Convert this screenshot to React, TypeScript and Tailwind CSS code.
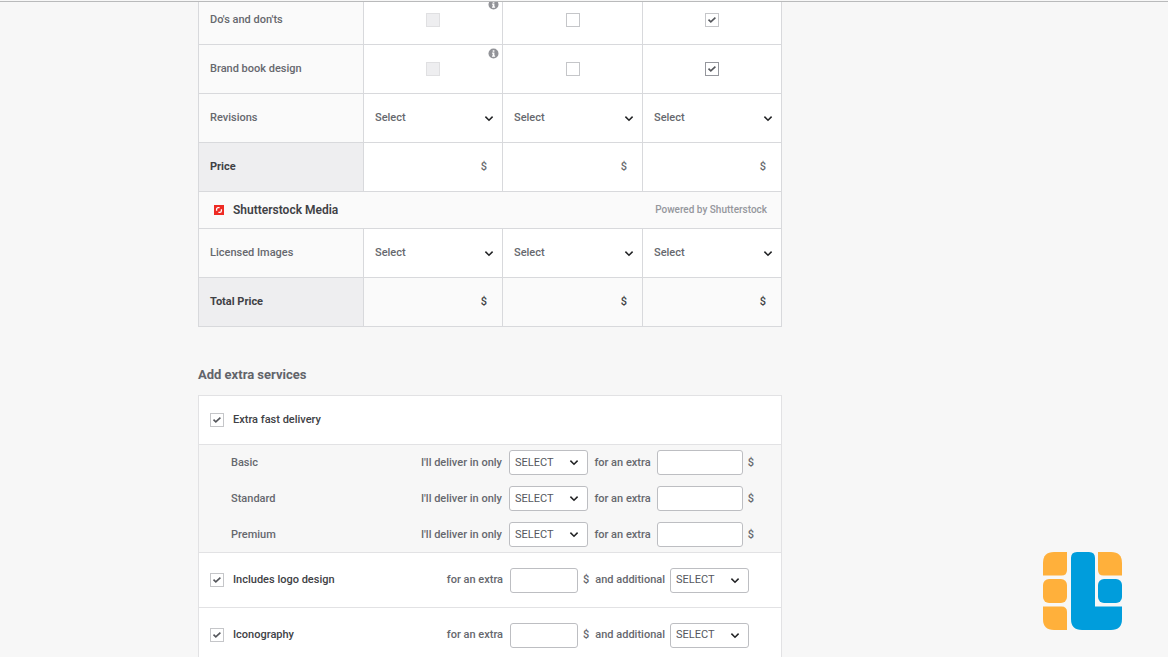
import type { ReactNode } from "react";

type Tier = "Basic" | "Standard" | "Premium";
const TIERS: Tier[] = ["Basic", "Standard", "Premium"];

function Chevron({ className }: { className: string }) {
  return (
    <svg viewBox="0 0 10 7" fill="none" stroke="#222325" strokeWidth="1.5" aria-hidden="true" className={"pointer-events-none col-start-1 row-start-1 h-[7px] w-[10px] self-center justify-self-end " + className}>
      <path d="M1.4 1.6 5 5.200l3.6-3.600" />
    </svg>
  );
}

function CheckBox({ id, label, checked, disabled, strong }: { id?: string; label?: string; checked?: boolean; disabled?: boolean; strong?: boolean }) {
  return (
    <span className="inline-grid size-[14px] shrink-0 align-middle">
      <input
        id={id}
        type="checkbox"
        aria-label={label}
        defaultChecked={checked}
        disabled={disabled}
        className={
          "peer col-start-1 row-start-1 size-[14px] appearance-none border bg-white disabled:border-[#e0e0e2] disabled:bg-[#eeeef0] " +
          (strong ? "border-[#95979d]" : "border-[#c5c6c9]")
        }
      />
      <svg viewBox="0 0 14 14" fill="none" stroke="#55575c" strokeWidth="1.6" aria-hidden="true" className="pointer-events-none invisible col-start-1 row-start-1 size-[14px] peer-checked:visible">
        <path d="M3.5 6.700 5.800 8.900l4.600-4.300" />
      </svg>
    </span>
  );
}

function InfoIcon() {
  return (
    <svg viewBox="0 0 11 11" aria-hidden="true" className="absolute top-[3px] right-[3px] size-[11px]">
      <circle cx="5.5" cy="5.5" r="5" fill="#929398" />
      <path d="M4.7 2.2h1.7v1.5H4.7zM4.1 4.6h2.3v3h.7v1.1H4V7.6h.7V5.7h-.6z" fill="#fff" />
    </svg>
  );
}

function Row({ label, strong, children }: { label: string; strong?: boolean; children: ReactNode }) {
  return (
    <tr className="h-[49px]">
      <th
        scope="row"
        className={
          "border-r border-b border-[#d8d9dc] pl-[11px] text-left " +
          (strong ? "bg-[#eeeef0] font-bold text-[#404145]" : "bg-[#fafafa] font-medium")
        }
      >
        {label}
      </th>
      {children}
    </tr>
  );
}

const CELL = "relative border-r border-b border-[#d8d9dc]";

function CheckRow({ label, strong }: { label: string; strong?: boolean }) {
  return (
    <Row label={label}>
      {TIERS.map((tier, i) => (
        <td key={tier} className={CELL + " bg-white text-center"}>
          {i === 0 && <InfoIcon />}
          <CheckBox label={`${label}, ${tier}`} disabled={i === 0} checked={i === 2} strong={strong && i === 2} />
        </td>
      ))}
    </Row>
  );
}

function SelectRow({ label }: { label: string }) {
  return (
    <Row label={label}>
      {TIERS.map((tier) => (
        <td key={tier} className={CELL + " bg-white"}>
          <div className="grid">
            <select aria-label={`${label}, ${tier}`} className="col-start-1 row-start-1 h-12 w-full appearance-none bg-transparent pl-[11px] font-medium">
              <option>Select</option>
            </select>
            <Chevron className="mr-2" />
          </div>
        </td>
      ))}
    </Row>
  );
}

function SmallSelect({ label }: { label: string }) {
  return (
    <span className="grid w-[79px] shrink-0">
      <select aria-label={label} className="col-start-1 row-start-1 h-[25px] w-full appearance-none rounded-[3px] border border-[#bdbec2] bg-white pl-[5px] font-normal text-[#55575d]">
        <option>SELECT</option>
      </select>
      <Chevron className="mr-[9px]" />
    </span>
  );
}

function Delivery({ tier }: { tier: Tier }) {
  return (
    <div className="flex h-[25px] items-center pr-[27px] pl-8">
      <span className="flex-1">{tier}</span>
      <span className="mr-[7px]">I'll deliver in only</span>
      <SmallSelect label={`${tier} delivery time`} />
      <label htmlFor={"fast-" + tier} className="w-[69px] text-center">for an extra</label>
      <input id={"fast-" + tier} type="text" className="h-[25px] w-[86px] rounded-[3px] border border-[#bdbec2] bg-white px-2" />
      <span className="w-[11px] text-right">$</span>
    </div>
  );
}

function Extra({ id, name }: { id: string; name: string }) {
  return (
    <div className="flex h-[55px] items-center border-t border-[#e2e2e4] bg-white pr-8 pl-[11px]">
      <CheckBox id={id} checked />
      <label htmlFor={id} className="ml-[9px] flex-1 text-[#404145]">{name}</label>
      <label htmlFor={id + "-price"} className="mr-[7px]">for an extra</label>
      <input id={id + "-price"} type="text" className="h-[25px] w-[68px] rounded-[3px] border border-[#bdbec2] bg-white px-2" />
      <span className="ml-[5px] flex-none">$</span>
      <span className="mr-[5px] ml-1.5 flex-none whitespace-nowrap">and additional</span>
      <SmallSelect label={`${name} additional time`} />
    </div>
  );
}

function BrandMark() {
  return (
    <svg viewBox="0 0 79 78" role="img" aria-label="Logo" className="fixed right-[46px] bottom-[27px] h-[78px] w-[79px]">
      <g fill="#ffb03b">
        <path d="M11 0H24V18Q24 23.500 18.500 23.500H0V11Q0 0 11 0Z" />
        <rect y="27" width="24" height="24" rx="6" />
        <path d="M0 54.500H18.500Q24 54.500 24 60V78H11Q0 78 0 67Z" />
        <path d="M55 0H68Q79 0 79 11V23.500H60.500Q55 23.500 55 18Z" />
      </g>
      <g fill="#009ddc">
        <path d="M34 0H46Q52 0 52 6V54.500H79V67Q79 78 68 78H39Q28 78 28 67V6Q28 0 34 0Z" />
        <rect x="55" y="27" width="24" height="24" rx="6" />
      </g>
    </svg>
  );
}

export default function App() {
  return (
    <div className="h-screen overflow-hidden bg-[#f7f7f7] font-['Roboto','Liberation_Sans',sans-serif] text-[11px] leading-4 font-medium text-[#66686e]">
      <div className="h-0.5 border-b border-[#b9babb]" />
      <main className="overflow-hidden pl-[198px]">
        <div className="w-full max-w-[584px]">
          <table className="-mt-1.5 w-full table-fixed border-separate border-spacing-0 border-l border-[#d8d9dc]">
            <colgroup>
              <col className="w-[165px]" />
              <col className="w-[139px]" />
              <col className="w-[140px]" />
              <col />
            </colgroup>
            <tbody>
              <CheckRow label="Do's and don'ts" />
              <CheckRow label="Brand book design" strong />
              <SelectRow label="Revisions" />
              <Row label="Price" strong>
                {TIERS.map((tier) => (
                  <td key={tier} className={CELL + " bg-white"}>
                    <label className="flex items-center pr-[15px]">
                      <input type="text" aria-label={`${tier} price`} className="h-8 min-w-0 flex-1 bg-transparent pl-3 outline-none" />
                      <span>$</span>
                    </label>
                  </td>
                ))}
              </Row>
              <tr className="h-[37px]">
                <td colSpan={4} className={CELL + " bg-[#fafafa]"}>
                  <div className="flex items-center pr-[14px] pl-[15px]">
                    <svg viewBox="0 0 10 10" aria-hidden="true" className="size-[10px]">
                      <rect width="10" height="10" fill="#ee2b24" />
                      <path d="M2.600 5.700V4.300Q2.600 2.700 4.200 2.700H5.600M4.400 7.300H5.800Q7.400 7.300 7.400 5.700V4.300" fill="none" stroke="#fff" strokeWidth="1.300" />
                    </svg>
                    <span className="ml-[9px] flex-1 text-[12px] font-semibold text-[#404145]">Shutterstock Media</span>
                    <span className="text-[10px] text-[#95979d]">Powered by Shutterstock</span>
                  </div>
                </td>
              </tr>
              <SelectRow label="Licensed Images" />
              <Row label="Total Price" strong>
                {TIERS.map((tier) => (
                  <td key={tier} className={CELL + " bg-[#fafafa] pr-[15px] text-right text-[#404145]"}>$</td>
                ))}
              </Row>
            </tbody>
          </table>

          <h2 className="mt-[39px] mb-[11px] text-[13px] leading-[18px] font-bold text-[#62646a]">Add extra services</h2>

          <section className="border border-[#e2e2e4]">
            <div className="flex h-12 items-center bg-white pl-[11px]">
              <CheckBox id="fast" checked />
              <label htmlFor="fast" className="ml-[9px] text-[#404145]">Extra fast delivery</label>
            </div>
            <div className="flex flex-col gap-[11px] border-t border-[#e2e2e4] py-[5px]">
              {TIERS.map((tier) => (
                <Delivery key={tier} tier={tier} />
              ))}
            </div>
            <Extra id="logo" name="Includes logo design" />
            <Extra id="icons" name="Iconography" />
          </section>
        </div>
      </main>
      <BrandMark />
    </div>
  );
}
